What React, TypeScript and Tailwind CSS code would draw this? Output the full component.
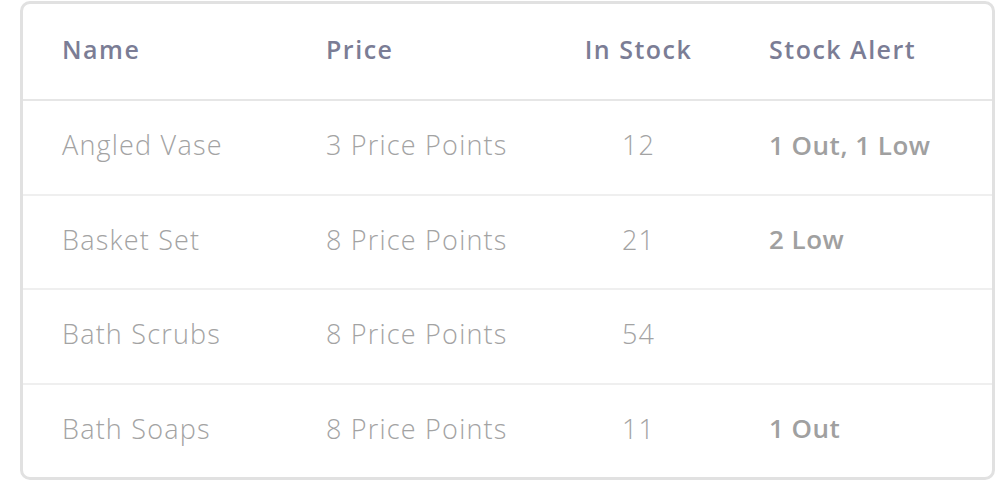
const rows = [
  { name: 'Angled Vase', price: '3 Price Points', stock: 12, alert: '1 Out, 1 Low' },
  { name: 'Basket Set', price: '8 Price Points', stock: 21, alert: '2 Low' },
  { name: 'Bath Scrubs', price: '8 Price Points', stock: 54, alert: '' },
  { name: 'Bath Soaps', price: '8 Price Points', stock: 11, alert: '1 Out' },
];

const cols = 'grid grid-cols-[264px_260px_183px_1fr] items-center';

export default function App() {
  return (
    <div className="w-[996px] h-[482px] bg-white pl-5 pr-px pt-px pb-[2px] font-['Open_Sans',sans-serif]">
      <div className="h-full rounded-[10px] border-[3px] border-[#e1e1e1] bg-white overflow-hidden flex flex-col">
        <div className={`${cols} h-[97px] pb-1 border-b-2 border-[#e6e6e6] text-[25px] font-semibold tracking-[1.5px] text-[#7b7d95]`}>
          <div className="pl-[39px]">Name</div>
          <div className="pl-[39px]">Price</div>
          <div className="text-center">In Stock</div>
          <div className="pl-[39px]">Stock Alert</div>
        </div>
        {rows.map((r, i) => (
          <div
            key={r.name}
            className={`${cols} flex-1 pb-1 text-[27px] font-light tracking-[1.2px] text-[#a3a3a3] ${i < rows.length - 1 ? 'border-b-2 border-[#efefef]' : ''}`}
          >
            <div className="pl-[39px]">{r.name}</div>
            <div className="pl-[39px]">{r.price}</div>
            <div className="text-center">{r.stock}</div>
            <div className="pl-[39px] text-[26px] font-semibold tracking-[0.5px] text-[#a0a0a0]">{r.alert}</div>
          </div>
        ))}
      </div>
    </div>
  );
}
